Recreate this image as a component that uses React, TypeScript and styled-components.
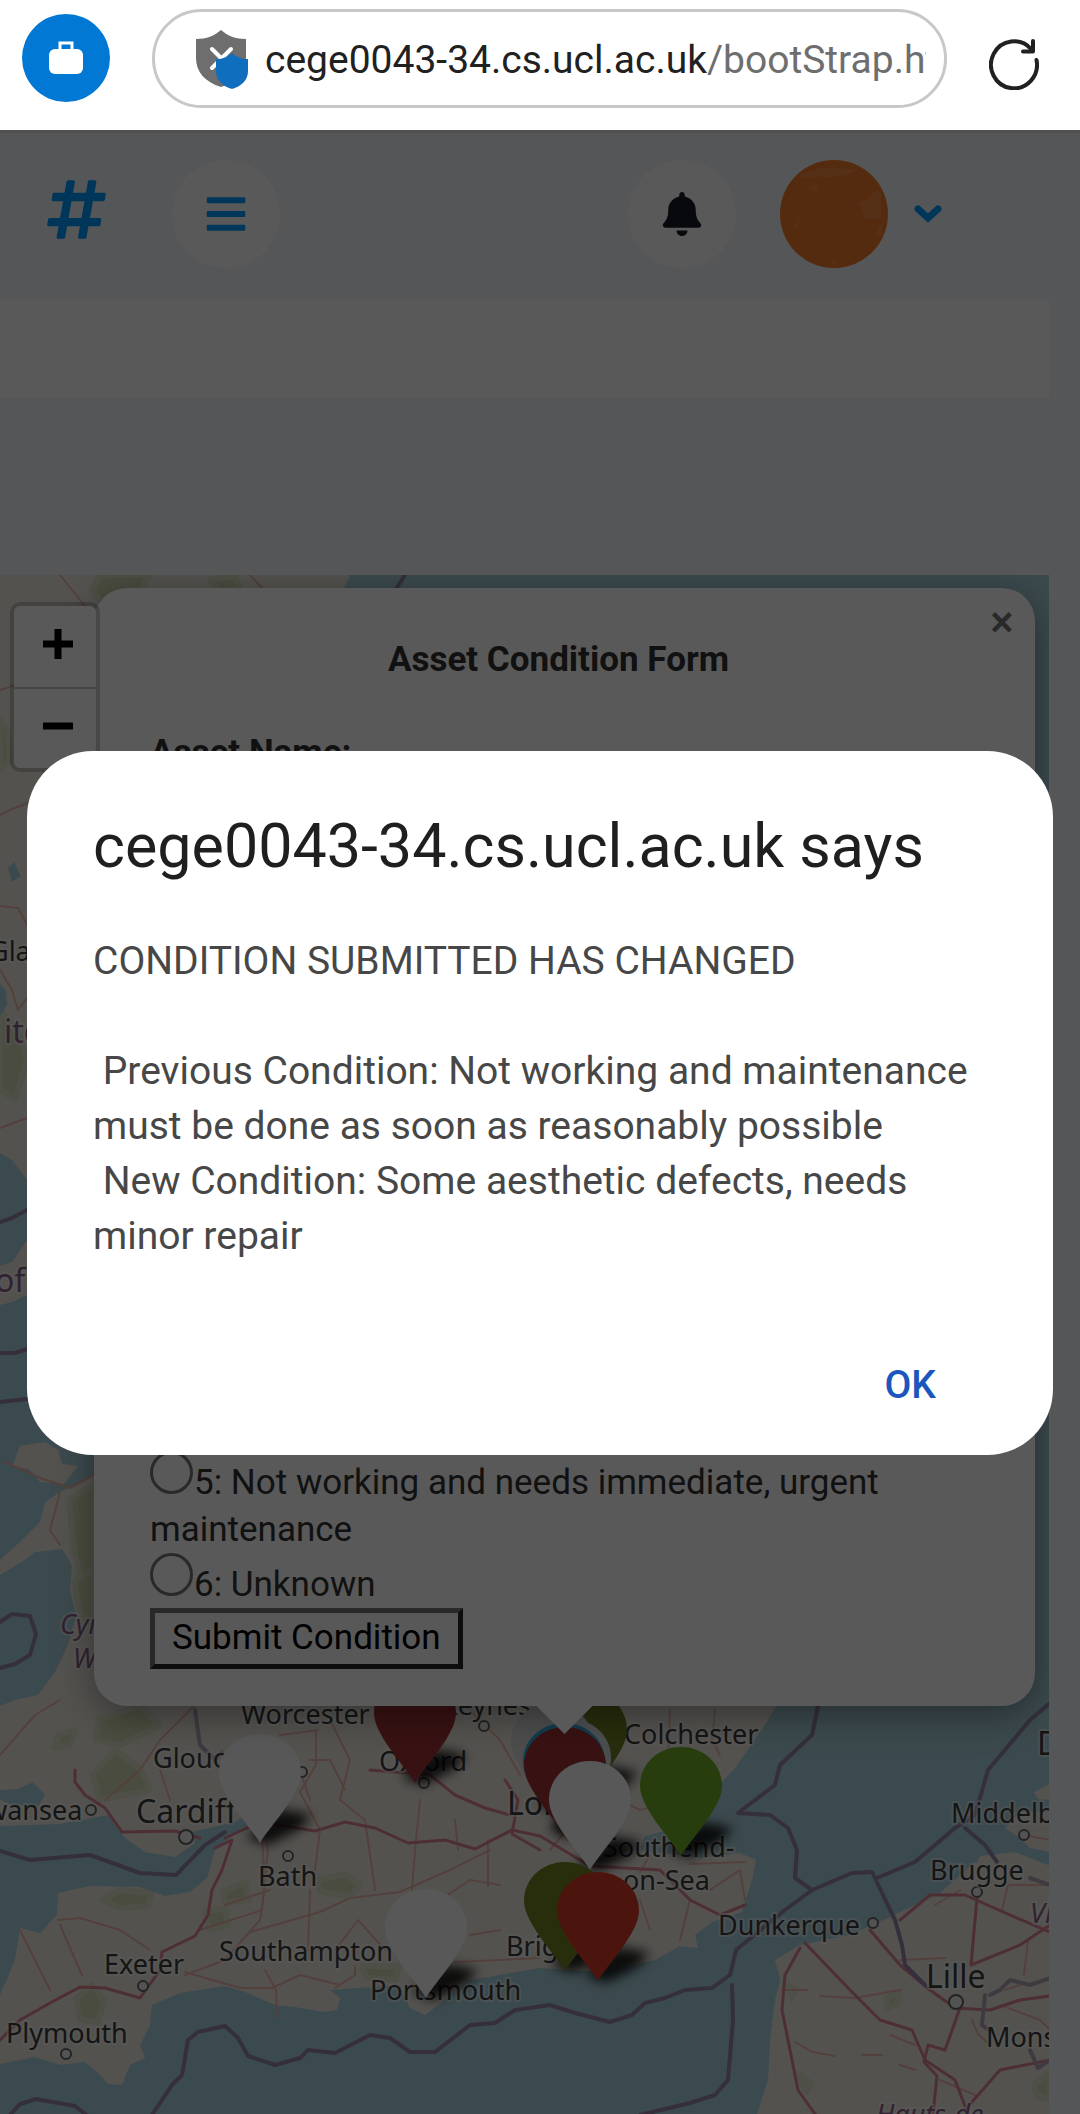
import React from "react";
import styled, { createGlobalStyle } from "styled-components";
import { FaBars, FaBell, FaHashtag } from "react-icons/fa";

const sans = `Roboto, "Liberation Sans", sans-serif`;

const GlobalStyle = createGlobalStyle`
  *, *::before, *::after { box-sizing: border-box; }
  body { margin: 0; background: #fff; font-family: ${sans}; }
  button { font-family: inherit; cursor: pointer; }
`;

const Shell = styled.div`
  display: flex;
  flex-direction: column;
  min-height: 100vh;
`;

/* ---------- browser toolbar ---------- */

const Toolbar = styled.header`
  display: flex;
  align-items: center;
  gap: 42px;
  height: 130px;
  padding: 0 41px 14px 22px;
  background: #fff;
`;

const ProfileButton = styled.button`
  display: grid;
  place-items: center;
  flex: none;
  width: 88px;
  height: 88px;
  padding: 0;
  border: 0;
  border-radius: 50%;
  background: #0078d4;
`;

const AddressBar = styled.button`
  display: flex;
  align-items: center;
  gap: 16px;
  flex: 1;
  min-width: 0;
  height: 99px;
  padding: 3px 18px 0 40px;
  border: 3px solid #c8c8c8;
  border-radius: 50px;
  background: #fff;
`;

const Address = styled.span`
  flex: 1;
  min-width: 0;
  overflow: hidden;
  white-space: nowrap;
  text-align: left;
  font-size: 39px;
  line-height: 56px;
  color: #212121;
`;

const AddressPath = styled.span`
  color: #6e6e6e;
`;

const ReloadButton = styled.button`
  display: grid;
  flex: none;
  padding: 12px 0 0;
  border: 0;
  background: none;
`;

/* ---------- dashboard page ---------- */

const Viewport = styled.div`
  position: relative;
  display: flex;
  flex: 1;
`;

const Page = styled.main`
  display: flex;
  flex: 1;
  flex-direction: column;
  min-width: 0;
  padding-right: 31px;
  border-top: 3px solid #e4e4e4;
  background: #f3f6f9;
`;

const NavBar = styled.nav`
  display: flex;
  align-items: center;
  height: 167px;
  padding: 0 107px 6px 43px;
`;

const Brand = styled.a`
  display: flex;
  margin-right: 62px;
  padding-bottom: 8px;
  color: #009cff;
  font-size: 67px;
`;

const RoundButton = styled.button<{ $tone: string }>`
  display: grid;
  place-items: center;
  width: 108px;
  height: 108px;
  padding: 0;
  border: 0;
  border-radius: 50%;
  background: #fff;
  color: ${(p) => p.$tone};
  font-size: 44px;
`;

const NavEnd = styled.div`
  display: flex;
  align-items: center;
  gap: 44px;
  margin-left: auto;
`;

const AccountButton = styled.button`
  display: flex;
  align-items: center;
  gap: 26px;
  padding: 0;
  border: 0;
  background: none;
`;

const Notice = styled.section`
  height: 98px;
  background: #fff;
`;

const MapPanel = styled.section`
  position: relative;
  flex: 1;
  min-height: 1400px;
  margin-top: 177px;
  overflow: hidden;
  background: #aad3df;
`;

const MapArt = styled.svg`
  position: absolute;
  top: 0;
  left: 0;
  width: 1050px;
  height: 1539px;
`;

const ZoomControl = styled.div`
  position: absolute;
  z-index: 2;
  top: 27px;
  left: 10px;
  display: grid;
  border: 4px solid rgba(0, 0, 0, 0.2);
  border-radius: 10px;
  background-clip: padding-box;
`;

const ZoomButton = styled.button`
  display: grid;
  place-items: center;
  width: 82px;
  height: 81px;
  padding: 0 0 5px 5px;
  border: 0;
  background: #fff;
  & + & {
    border-top: 2px solid #ccc;
    border-radius: 0 0 6px 6px;
  }
  &:first-child {
    border-radius: 6px 6px 0 0;
  }
`;

const Popup = styled.form`
  position: absolute;
  z-index: 1;
  top: 13px;
  right: 14px;
  left: 94px;
  display: flex;
  flex-direction: column;
  justify-content: space-between;
  min-height: 1118px;
  padding: 48px 68px 37px 56px;
  border-radius: 33px;
  background: #fff;
  box-shadow: 0 8px 38px rgba(0, 0, 0, 0.4);
  color: #333;
  font-size: 35px;
  line-height: 47px;
`;

const PopupTip = styled.span`
  position: absolute;
  top: 100%;
  left: 50%;
  width: 56px;
  height: 28px;
  margin-left: -28px;
  background: #fff;
  clip-path: polygon(0 0, 100% 0, 50% 100%);
`;

const PopupClose = styled.button`
  position: absolute;
  top: 10px;
  right: 9px;
  width: 48px;
  height: 48px;
  padding: 0;
  border: 0;
  background: none;
  color: #757575;
  font-size: 44px;
  font-weight: 500;
  line-height: 48px;
`;

const PopupTitle = styled.h2`
  margin: 0 0 46px;
  font-size: 35px;
  line-height: 47px;
  text-align: center;
`;

const FieldName = styled.p`
  margin: 0;
  font-weight: 700;
`;

const Choice = styled.label`
  display: block;
`;

const Radio = styled.input`
  appearance: none;
  width: 43px;
  height: 43px;
  margin: 0 1px 0 0;
  border: 3px solid #767676;
  border-radius: 50%;
  vertical-align: baseline;
`;

const SubmitButton = styled.button`
  display: block;
  height: 61px;
  padding: 0 17px 2px;
  border: 5px solid;
  border-color: #767676 #262626 #262626 #767676;
  background: #fbfbfb;
  color: #000;
  font-size: 35px;
  line-height: 47px;
`;

/* ---------- alert ---------- */

const Scrim = styled.div`
  position: absolute;
  z-index: 3;
  inset: 0;
  display: flex;
  align-items: center;
  padding: 0 27px 38px;
  background: rgba(0, 0, 0, 0.65);
`;

const Dialog = styled.section`
  flex: 1;
  padding: 55px 66px 16px;
  border-radius: 66px;
  background: #fff;
`;

const DialogTitle = styled.h1`
  margin: 0;
  color: #1f1f1f;
  font-size: 61px;
  font-weight: 400;
  line-height: 80px;
`;

const Message = styled.p`
  margin: 48px 0 67px;
  color: #474747;
  font-size: 39px;
  line-height: 55px;
  white-space: pre-wrap;
`;

const DialogActions = styled.div`
  display: flex;
  justify-content: flex-end;
`;

const OkButton = styled.button`
  padding: 28px 51px;
  border: 0;
  background: none;
  color: #1a56bd;
  font-size: 39px;
  font-weight: 500;
  line-height: 52px;
`;

/* ---------- drawings ---------- */

const BriefcaseIcon = () => (
  <svg width="34" height="34" viewBox="0 0 34 34" aria-hidden="true">
    <path d="M11 9V2h12v7" fill="none" stroke="#fff" strokeWidth="3" />
    <rect x="0" y="8" width="34" height="25" rx="6" fill="#fff" />
  </svg>
);

const ShieldIcon = () => (
  <svg width="54" height="60" viewBox="0 0 54 60" aria-hidden="true">
    <path
      d="M26 0c7 6 14 9 25 9v19c0 14-9 24-25 29C10 52 1 42 1 28V9C12 9 19 6 26 0z"
      fill="#6e6e6e"
    />
    <path d="M17 19l19 19M36 19L17 38" stroke="#fff" strokeWidth="4" strokeLinecap="round" />
    <path
      d="M37 23c5 4 9 6 16 6v12c0 9-6 15-16 18-10-3-16-9-16-18V29c7 0 11-2 16-6z"
      fill="#106ebe"
    />
  </svg>
);

const ReloadIcon = () => (
  <svg width="50" height="52" viewBox="0 0 50 52" aria-hidden="true">
    <g fill="none" stroke="#212121" strokeWidth="4" strokeLinecap="round" strokeLinejoin="round">
      <path d="M47.500 22A23 23.500 0 1 1 42 11" />
      <path d="M44 3v10.500H34" />
    </g>
  </svg>
);

const ChevronIcon = () => (
  <svg width="28" height="18" viewBox="0 0 28 18" aria-hidden="true">
    <path
      d="M4 4l10 9 10-9"
      fill="none"
      stroke="#009cff"
      strokeWidth="7"
      strokeLinecap="round"
      strokeLinejoin="miter"
    />
  </svg>
);

const Avatar = () => (
  <svg width="108" height="108" viewBox="0 0 108 108" aria-hidden="true">
    <clipPath id="avatar-clip">
      <circle cx="54" cy="54" r="54" />
    </clipPath>
    <g clipPath="url(#avatar-clip)">
      <rect width="108" height="108" fill="#f07c28" />
      <path d="M20 14L42 8l36 1-8 5-22 4-12-2-14 3z" fill="#f38b44" />
      <path d="M78 42l8-2 10-9 5 2v25l-16 1-3-9z" fill="#f38b44" />
      <path d="M98 66h4v10h-5zM14 66l6-9-3 11zM50 103l4-4 4 6z" fill="#f38b44" />
      <path d="M26 28l8-5 5 3-3 6z" fill="#f28438" />
    </g>
  </svg>
);

const seaPaths = [
  "M350 575H1050V1900L975 1862L940 1893L890 1917L850 1935L800 1945L775 1960L780 1980L775 2000L770 2040L768 2080L757 2114H0V2064L35 2057L60 2065L85 2062L100 2075L108 2084L122 2085L130 2065L145 2058L140 2045L150 2025L152 2005L180 1993L225 1986L245 1992L275 2005L295 2007L325 2012L337 2010L340 1998L330 1990L400 1985L410 2008L425 2015L438 2005L470 1980L540 1968L600 1972L655 1960L680 1946L698 1948L695 1935L712 1922L742 1912L752 1880L756 1860L740 1853L700 1858L640 1850L645 1836L690 1825L710 1795L735 1768L765 1725L775 1708L790 1680V1400L500 1100L320 640Z",
  "M0 1153L12 1160L27 1180L60 1190V1240L27 1240L12 1262L0 1266Z",
  "M0 1305L12 1302L27 1295L70 1280L94 1300V1475L78 1484L60 1492L45 1502L40 1522L20 1542L0 1560Z",
  "M0 1575L25 1560L35 1552L62 1549L72 1565L70 1590L76 1615L68 1645L55 1672L38 1695L15 1700L0 1706Z",
  "M0 1790L18 1789L33 1782L45 1795L38 1806L15 1806L0 1800Z",
  "M0 1826L60 1824L108 1815L125 1838L145 1852L175 1857L195 1843L192 1832L235 1822L250 1812V1824L230 1838L215 1850L207 1878L190 1892L165 1896L140 1887L90 1886L58 1893L57 1915L40 1933L20 1928L15 1960L0 1995Z",
  "M0 984L6 990L7 1005L0 1016Z",
  "M8 868L14 862L21 876L12 882Z",
];

const landPaths = [
  "M12 1466L20 1446L45 1442L58 1450L62 1464L78 1466L64 1484L40 1482L30 1470Z",
  "M1005 1828L1020 1812H1050V1852L1030 1848L1020 1838Z",
  "M1034 1792L1050 1784V1800L1038 1799Z",
  "M980 1856L1015 1852L1050 1866V1900H960Z",
];

const greenPaths = [
  "M100 575H150L130 605L100 600L92 590Z",
  "M210 580L235 576L240 588L220 592Z",
  "M0 1010L20 1035L27 1060L15 1100L0 1090Z",
  "M70 1500L94 1485V1580L80 1575L72 1540Z",
  "M74 1580L94 1570V1625L80 1615Z",
  "M98 1720L140 1706L160 1725L120 1745L96 1740Z",
  "M92 1775L115 1750L140 1768L150 1790L100 1800Z",
  "M58 1735L76 1730L70 1745L54 1748Z",
  "M102 1900L120 1890L152 1893L148 1906L120 1908Z",
  "M76 1998L92 1985L104 2000L98 2022L80 2020Z",
  "M222 1892L245 1882L250 1900L225 1903Z",
  "M318 1880L345 1874L360 1885L350 1896L320 1892Z",
  "M362 1966L400 1966L395 1980L366 1978Z",
  "M205 1912L225 1908L228 1925L210 1930Z",
  "M1034 2084L1050 2072V2100L1036 2096Z",
  "M0 720L8 730L10 760L0 770Z",
  "M788 1986L796 1990L792 1998ZM886 1998L900 1992L898 2004L888 2008ZM800 2075L812 2084L806 2092Z",
];

const motorways = [
  "M75 1770V1782L85 1795L105 1808L122 1832L175 1831L200 1838",
  "M215 1848L232 1840L222 1870L212 1890L208 1915L195 1936L162 1952L160 1970L140 1998L105 1988L80 1987L50 2003L20 2020L0 2040",
  "M225 1838L260 1822L315 1831L345 1822L375 1828L408 1843L445 1840L475 1849L512 1830L540 1836",
  "M370 1770L430 1775L455 1795L485 1808L510 1815M540 1850L512 1834L518 1800L505 1780",
  "M540 1836L590 1866L660 1870L690 1900L720 1915L745 1905",
  "M870 1930L900 1965L930 1990L955 2008L990 2010L1020 2000L1050 1996",
  "M900 1920L930 1895L965 1895L1010 1915L1050 1932M977 1898L971 1965L1020 1945L1050 1925",
  "M800 1948L785 1975L782 2010L790 2050L798 2090L815 2114M805 1943L850 1990L880 2020L912 2030L925 2060L955 2080L965 2106",
  "M960 2008L945 2050L928 2045L924 2062L937 2076L933 2114M965 2110L1000 2070L1050 2060",
];

const roads = [
  "M0 690L30 680M60 575L80 600L92 615M250 575L262 588M0 815L10 810L30 802",
  "M0 906L18 908L27 925M0 970L12 990L18 1010L27 998M0 1128L27 1118",
  "M5 1462L40 1478L70 1488L94 1475M60 1492L50 1530L60 1545",
  "M0 1755L35 1715L60 1700M105 1800L140 1770L160 1740L180 1720L200 1700",
  "M160 1770L170 1800M300 1770L310 1800M316 1730L316 1765L300 1792L320 1830L315 1870",
  "M280 1735L318 1730M330 1720L350 1760L340 1800L365 1820L375 1890M260 1815L268 1850L262 1910L200 1930",
  "M58 1920L80 1918L120 1930L150 1950M60 1925L82 1975M50 1990L20 1930M225 1905L270 1890M310 1890L308 1950",
  "M250 1932L320 1912L350 1898L400 1892L450 1870L490 1850M262 1835L265 1885L260 1920L225 1960L185 1975",
  "M185 1972L240 1988L272 1988L300 1975L340 1985M265 1970L276 1990L277 2018M335 1988L355 1975V1966",
  "M420 1800L415 1850L412 1890M440 1900L470 1880L500 1885M455 1820L458 1850M358 1920L385 1950M358 1920L335 1950",
  "M470 1935L500 1930M455 1962L540 1958M488 1840V1886M470 1710L500 1740L520 1775M345 1790L330 1760L310 1760",
  "M550 1850L600 1790L640 1810L680 1800M670 1710L668 1760M715 1710L712 1740L720 1755M650 1855L640 1872",
  "M640 1900L650 1930M710 1890L740 1870L745 1900M690 1900L680 1940M745 1862L690 1864",
  "M782 1990H808M820 1996L855 1998L900 1990M795 2042L812 2052L835 2056M862 2055H882M890 2035L915 2045",
  "M1005 1990L1020 1985M972 2020L978 2034L990 2045M1050 1885L1008 1885L1002 1910M935 1905L960 1890M1023 1835L1050 1840",
  "M1000 2005L1040 2020L1050 2030M900 1960L945 1958M1028 1940L1024 1975M940 2080L975 2095M900 2065L915 2070",
];

const seaBorders = [
  "M405 575L394 592M0 1222L12 1218L27 1210M0 1353L15 1353L30 1348M0 1402L27 1399",
  "M0 1622L12 1614L30 1616L36 1634L30 1655L15 1664L0 1668",
  "M0 1851L30 1860L90 1855L140 1873L176 1875L205 1845L225 1832",
  "M0 2126L20 2104L36 2099L75 2106L90 2118M150 2118L172 2085L182 2075L188 2040L198 2032L225 2026L238 2038L248 2056L275 2065L300 2058L308 2050L335 2053L370 2035L390 2038L410 2052L435 2052L470 2025L495 2023L515 2010L550 2005L575 2013L610 2022L632 2015L645 2003L665 1998L685 1990L712 1988L730 1975L736 1950L785 1910L812 1890L795 1878L797 1850L788 1828L770 1815L738 1813L775 1785L780 1765",
  "M818 1706L812 1735L780 1765M812 1890L852 1873L872 1872L895 1920L902 1945L905 1965L925 1985M877 1878L915 1862L955 1828L975 1815L988 1770L1030 1720L1050 1703M965 1828L985 1845L997 1862",
  "M732 1985L733 2020L728 2080L715 2095L690 2103L640 2115",
];

const landBorders = [
  "M990 1995L1000 1990L1010 1980L1030 1985L1050 1978M985 1995L982 2025L992 2032M1030 2050L1038 2068L1050 2060M1030 1878L1050 1885M195 1710L200 1745L215 1760L222 1752",
];

type TownProps = { x: number; y: number; name: string; big?: boolean; dot?: [number, number] };

const towns: TownProps[] = [
  { x: -11, y: 961, name: "Glasgow" },
  { x: -14, y: 1820, name: "wansea", dot: [91, 1810] },
  { x: 136, y: 1823, name: "Cardiff", big: true, dot: [186, 1837] },
  { x: 258, y: 1886, name: "Bath", dot: [288, 1856] },
  { x: 104, y: 1974, name: "Exeter", dot: [143, 1986] },
  { x: 219, y: 1961, name: "Southampton" },
  { x: 6, y: 2043, name: "Plymouth", dot: [66, 2054] },
  { x: 370, y: 2000, name: "Portsmouth" },
  { x: 506, y: 1956, name: "Brighton" },
  { x: 241, y: 1724, name: "Worcester" },
  { x: 153, y: 1768, name: "Gloucester", dot: [302, 1772] },
  { x: 379, y: 1771, name: "Oxford", dot: [424, 1783] },
  { x: 441, y: 1715, name: "Keynes", dot: [484, 1726] },
  { x: 507, y: 1815, name: "London", big: true },
  { x: 624, y: 1744, name: "Colchester" },
  { x: 603, y: 1857, name: "Southend-" },
  { x: 623, y: 1890, name: "on-Sea" },
  { x: 718, y: 1935, name: "Dunkerque", dot: [873, 1923] },
  { x: 951, y: 1823, name: "Middelburg", dot: [1024, 1835] },
  { x: 930, y: 1880, name: "Brugge", dot: [977, 1892] },
  { x: 926, y: 1988, name: "Lille", big: true, dot: [956, 2002] },
  { x: 986, y: 2047, name: "Mons" },
  { x: 1037, y: 1755, name: "Den Haag", big: true },
];

const regions: TownProps[] = [
  { x: 4, y: 1043, name: "ited", big: true },
  { x: -5, y: 1292, name: "of", big: true },
  { x: 60, y: 1634, name: "Cymru" },
  { x: 73, y: 1668, name: "Wales" },
  { x: 1030, y: 1923, name: "Vlaanderen" },
  { x: 876, y: 2124, name: "Hauts-de-" },
];

const MapLabel = styled.text<{ $big?: boolean; $region?: boolean }>`
  font-family: "Noto Sans", "Open Sans", sans-serif;
  font-size: ${(p) => (p.$big ? 32 : 27)}px;
  font-style: ${(p) => (p.$region && !p.$big ? "italic" : "normal")};
  fill: ${(p) => (p.$region ? "#8d618b" : "#3c3c3c")};
  stroke: rgba(255, 255, 255, 0.5);
  stroke-width: 4px;
  stroke-linejoin: round;
  paint-order: stroke;
`;

const pins = [
  { x: 415, y: 1783, fill: "#a23336" },
  { x: 260, y: 1843, fill: "#fbfbfb" },
  { x: 586, y: 1800, fill: "#728224" },
  { x: 552, y: 1812, fill: "#dcdcdc" },
  { x: 570, y: 1828, fill: "#d8e0e4" },
  { x: 564, y: 1832, fill: "#38aadd" },
  { x: 565, y: 1836, fill: "#a23336" },
  { x: 590, y: 1870, fill: "#fbfbfb" },
  { x: 681, y: 1856, fill: "#72b026" },
  { x: 426, y: 1998, fill: "#fbfbfb" },
  { x: 565, y: 1971, fill: "#728224" },
  { x: 598, y: 1981, fill: "#d63e2a" },
];

const MapDrawing = () => (
  <MapArt viewBox="0 575 1050 1539" aria-label="Map of southern Britain and the Channel">
    <defs>
      <filter id="pin-shadow" x="-50%" y="-50%" width="200%" height="200%">
        <feGaussianBlur stdDeviation="6" />
      </filter>
    </defs>
    <rect y="575" width="1050" height="1539" fill="#efebe2" />
    {greenPaths.map((d) => (
      <path key={d} d={d} fill="#d3dbb4" stroke="#e0e4cb" strokeWidth="6" strokeLinejoin="round" />
    ))}
    {seaPaths.map((d) => (
      <path key={d} d={d} fill="#aad3df" />
    ))}
    {landPaths.map((d) => (
      <path key={d} d={d} fill="#efebe2" />
    ))}
    <g fill="none" strokeLinejoin="round" strokeLinecap="round">
      {roads.map((d) => (
        <path key={d} d={d} stroke="#edb8ac" strokeWidth="2" />
      ))}
      {motorways.map((d) => (
        <path key={d} d={d} stroke="#dc8494" strokeWidth="3" />
      ))}
      {seaBorders.map((d) => (
        <path key={d} d={d} stroke="#9488a8" strokeWidth="4" />
      ))}
      {landBorders.map((d) => (
        <path key={d} d={d} stroke="#b4a6b8" strokeWidth="4" />
      ))}
    </g>
    {towns.map((t) => (
      <g key={t.name}>
        {t.dot && (
          <circle
            cx={t.dot[0]}
            cy={t.dot[1]}
            r={t.big ? 7 : 5}
            fill="#eee"
            stroke="#666"
            strokeWidth="2"
          />
        )}
        <MapLabel x={t.x} y={t.y} $big={t.big}>
          {t.name}
        </MapLabel>
      </g>
    ))}
    {regions.map((t) => (
      <MapLabel key={t.name} x={t.x} y={t.y} $big={t.big} $region>
        {t.name}
      </MapLabel>
    ))}
    {pins.map((p) => (
      <g key={`${p.x}-${p.y}`} transform={`translate(${p.x} ${p.y})`}>
        <path
          d="M-14 -6L20 -34L52 -28L40 -14L8 2Z"
          fill="#000"
          opacity="0.85"
          filter="url(#pin-shadow)"
        />
        <path
          d="M0 0C-9 -16 -41 -48 -41 -70C-41 -93 -22 -109 0 -109S41 -93 41 -70C41 -48 9 -16 0 0Z"
          fill={p.fill}
        />
      </g>
    ))}
  </MapArt>
);

const message = `CONDITION SUBMITTED HAS CHANGED

 Previous Condition: Not working and maintenance must be done as soon as reasonably possible
 New Condition: Some aesthetic defects, needs minor repair`;

export default function App() {
  return (
    <>
      <GlobalStyle />
      <Shell>
        <Toolbar>
          <ProfileButton aria-label="Work profile">
            <BriefcaseIcon />
          </ProfileButton>
          <AddressBar>
            <ShieldIcon />
            <Address>
              cege0043-34.cs.ucl.ac.uk<AddressPath>/bootStrap.html</AddressPath>
            </Address>
          </AddressBar>
          <ReloadButton aria-label="Reload">
            <ReloadIcon />
          </ReloadButton>
        </Toolbar>

        <Viewport>
          <Page>
            <NavBar>
              <Brand href="#" aria-label="Home">
                <FaHashtag />
              </Brand>
              <RoundButton $tone="#009cff" aria-label="Menu">
                <FaBars />
              </RoundButton>
              <NavEnd>
                <RoundButton $tone="#191c24" aria-label="Notifications">
                  <FaBell />
                </RoundButton>
                <AccountButton aria-label="Account">
                  <Avatar />
                  <ChevronIcon />
                </AccountButton>
              </NavEnd>
            </NavBar>
            <Notice />
            <MapPanel>
              <MapDrawing />
              <ZoomControl>
                <ZoomButton aria-label="Zoom in">
                  <svg width="30" height="30" viewBox="0 0 30 30" aria-hidden="true">
                    <path d="M15 0v30M0 15h30" stroke="#000" strokeWidth="7" />
                  </svg>
                </ZoomButton>
                <ZoomButton aria-label="Zoom out">
                  <svg width="30" height="30" viewBox="0 0 30 30" aria-hidden="true">
                    <path d="M0 15h30" stroke="#000" strokeWidth="7" />
                  </svg>
                </ZoomButton>
              </ZoomControl>
              <Popup onSubmit={(e) => e.preventDefault()}>
                <div>
                  <PopupTitle>Asset Condition Form</PopupTitle>
                  <FieldName>Asset Name:</FieldName>
                </div>
                <div>
                  <Choice>
                    <Radio type="radio" name="condition" value="5" />
                    5: Not working and needs immediate, urgent maintenance
                  </Choice>
                  <Choice>
                    <Radio type="radio" name="condition" value="6" />
                    6: Unknown
                  </Choice>
                  <SubmitButton type="submit">Submit Condition</SubmitButton>
                </div>
                <PopupClose type="button" aria-label="Close">
                  ×
                </PopupClose>
                <PopupTip />
              </Popup>
            </MapPanel>
          </Page>

          <Scrim>
            <Dialog role="alertdialog" aria-labelledby="alert-title" aria-describedby="alert-text">
              <DialogTitle id="alert-title">cege0043-34.cs.ucl.ac.uk says</DialogTitle>
              <Message id="alert-text">{message}</Message>
              <DialogActions>
                <OkButton>OK</OkButton>
              </DialogActions>
            </Dialog>
          </Scrim>
        </Viewport>
      </Shell>
    </>
  );
}
